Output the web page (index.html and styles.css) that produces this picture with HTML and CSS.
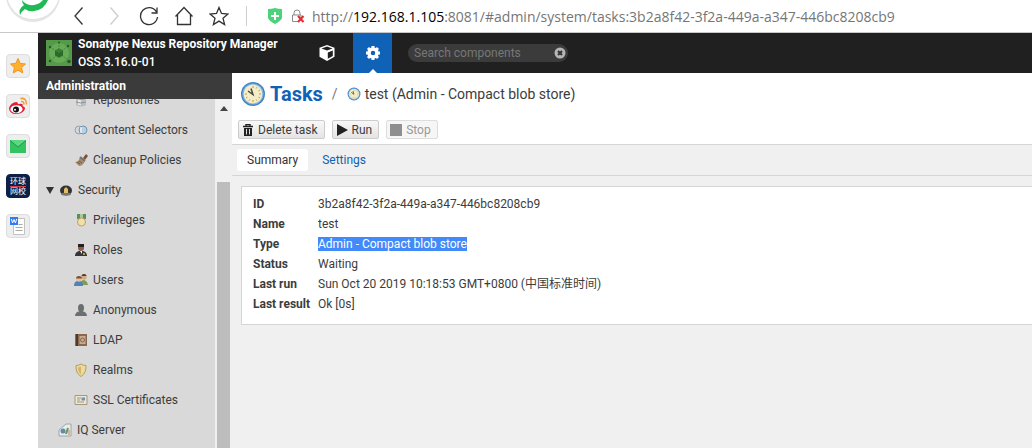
FILE: index.html
```html
<!DOCTYPE html>
<html lang="en">
<head>
  <meta charset="UTF-8"/>
  <meta name="viewport" content="width=device-width, initial-scale=1.0"/>
  <title>Tasks - Nexus Repository Manager</title>
  <link rel="stylesheet" href="styles.css">
</head>
<body>
  <svg class="defs" aria-hidden="true">
    <symbol id="clock" viewBox="0 0 26 26">
      <circle cx="13" cy="13" r="12" fill="#3f86c6"/>
      <circle cx="13" cy="13" r="10.6" fill="#7fb2dd"/>
      <circle cx="13" cy="13" r="9.4" fill="#f4edc6"/>
      <path d="M13 5v2M13 19v2M5 13h2M19 13h2M17 6.200l-.8 1.300M20 9l-1.400.8M20 17l-1.400-.8M17 19.800l-.8-1.300M9 19.800l.8-1.300M6 17l1.400-.8" stroke="#a59c78" fill="none"/>
      <path d="M8 10l5 3.500-2-6" stroke="#4a4a42" stroke-width="1.500" fill="none"/>
    </symbol>
  </svg>

  <!-- Browser bar -->
  <div class="browser">
    <div class="browser-logo">
      <svg width="61" height="32" viewBox="0 0 61 32">
        <circle cx="33" cy="-5" r="27" fill="#e4e4e4"/>
        <circle cx="33" cy="-7" r="26" fill="#fff"/>
        <path d="M22 0Q26 6 34 5Q40 4 43 0L48 0Q44 10 34 11Q29 12 25 9Q22 11 20 15Q18 9 24 5Q22 3 22 0Z" fill="#1fb956"/>
      </svg>
    </div>
    <button class="nav-btn" aria-label="Back"><svg width="20" height="20" viewBox="0 0 20 20"><path d="M13.500 1.500L6 10l7.500 8.500"/></svg></button>
    <button class="nav-btn off" aria-label="Forward"><svg width="20" height="20" viewBox="0 0 20 20"><path d="M6.500 1.500L14 10l-7.500 8.500"/></svg></button>
    <button class="nav-btn" aria-label="Reload"><svg width="20" height="20" viewBox="0 0 20 20"><path d="M17.500 6A8.500 8.500 0 1 0 18.500 11M18 1.500V7h-5.500"/></svg></button>
    <button class="nav-btn" aria-label="Home"><svg width="20" height="20" viewBox="0 0 20 20"><path d="M1.500 10.500L10 1.500l8.500 9M3.500 9v9.500h13V9"/></svg></button>
    <button class="nav-btn" aria-label="Favorite"><svg width="20" height="20" viewBox="0 0 20 20"><path d="M10 1.500l2.500 6 6.500.5-5 4.200 1.600 6.300L10 15.100l-5.600 3.400L6 12.200 1 8l6.500-.5z"/></svg></button>
    <span class="divider"></span>
    <svg class="shield" width="14" height="16" viewBox="0 0 14 16"><path d="M0 1Q4 1 7 0Q10 1 14 1V10Q13 13 7 16Q1 13 0 10Z" fill="#4bd37b"/><path d="M7 4v8M3 8h8" stroke="#fff" stroke-width="2"/></svg>
    <svg class="lock" width="14" height="14" viewBox="0 0 14 14"><path d="M3 6V4a3 3 0 0 1 6 0v2M8 12.500H1.500V6H10v2" fill="none" stroke="#8b8b8b"/><path d="M7 7l5.500 6M12.500 7L7 13" stroke="#e02b35" stroke-width="2"/></svg>
    <div class="url">http://<b>192.168.1.105</b>:8081/#admin/system/tasks:3b2a8f42-3f2a-449a-a347-446bc8208cb9</div>
  </div>

  <div class="window">
    <!-- Shortcuts -->
    <div class="rail">
      <a class="shortcut" href="#" aria-label="Favorites"><svg width="24" height="24" viewBox="0 0 24 24"><path d="M12 4.500l2.200 4.900 5.300.6-3.900 3.600 1.100 5.300-4.700-2.700-4.700 2.700 1.100-5.300L4.500 10l5.300-.6z" fill="#ffb12e" stroke="#f29422"/></svg></a>
      <a class="shortcut" href="#" aria-label="Weibo"><svg width="24" height="24" viewBox="0 0 24 24"><path d="M3 15Q3 11 8 8.500Q12 7 12 10Q18 9 16.500 12Q20 13 18.500 16Q16 20 10 20Q4 20 3 15Z" fill="#df2038"/><ellipse cx="10.500" cy="15.200" rx="6" ry="4" fill="#fff"/><circle cx="10" cy="15.500" r="3" fill="#111"/><circle cx="9" cy="15.800" r="1" fill="#fff"/><path d="M14.500 4.500q6-1 6 6M15 7.500q3-.5 3 3" fill="none" stroke="#f29a2e" stroke-width="1.500"/></svg></a>
      <a class="shortcut" href="#" aria-label="Mail"><svg width="24" height="24" viewBox="0 0 24 24"><path d="M4 6h16v13H4z" fill="#35c263"/><path d="M4 6h16l-8 7z" fill="#5ad982"/><path d="M4 6.500l8 6.500 8-6.500" fill="none" stroke="#1c9c48"/></svg></a>
      <a class="shortcut school" href="#"><span>环球</span><span>网校</span></a>
      <a class="shortcut" href="#" aria-label="Document"><svg width="24" height="24" viewBox="0 0 24 24"><path d="M7.500 4.500h11v16h-11z" fill="#fff" stroke="#c2c2c2"/><path d="M12.500 10.500h4M9.500 13.500h7M9.500 16.500h7" stroke="#aaa"/><path d="M4 3h8v8H4z" fill="#2f7df0"/><path d="M5.300 5l1.300 4L8 5.500 9.400 9l1.300-4" fill="none" stroke="#fff"/></svg></a>
    </div>

    <div class="app">
      <!-- Header -->
      <header class="app-header">
        <svg class="app-logo" width="26" height="26" viewBox="0 0 26 26">
          <path d="M0 0h26v26H0z" fill="#549a48"/><circle cx="13" cy="13" r="10" fill="#66ab56"/>
          <path d="M13 13L4 7M13 13l9-7M13 13L4 21M13 13l10 8M13 13V2" stroke="#4a8a40" stroke-dasharray="2 1"/>
          <path d="M13 8.500l4 2.300v4.600L13 17.700l-4-2.300v-4.600z" fill="#2c6a2a"/><path d="M13 8.500l4 2.300-4 2.200-4-2.200z" fill="#3c7e36"/>
          <g fill="#2a5826"><circle cx="4" cy="7" r="1.200"/><circle cx="22" cy="6" r="1.200"/><circle cx="4" cy="21" r="1.200"/><circle cx="23" cy="21.500" r="1.800"/><circle cx="13" cy="2.500" r="1"/></g>
        </svg>
        <div class="app-name"><div>Sonatype Nexus Repository Manager</div><div class="version">OSS 3.16.0-01</div></div>
        <button class="mode" aria-label="Browse"><svg width="18" height="18" viewBox="0 0 18 18"><path d="M9 1l7.500 2.800v9L9 17l-7.500-4.200v-9z" fill="#fff"/><path d="M3.500 4.400L9 2.600l5.500 1.800L9 6.600z" fill="#202020"/><path d="M9.800 8.600l5-2.200v5.500l-5 2.900z" fill="#202020"/></svg></button>
        <button class="mode active" aria-label="Administration"><svg width="16" height="16" viewBox="0 0 16 16"><circle cx="8" cy="8" r="4" fill="none" stroke="#fff" stroke-width="3.500"/><path d="M8 1v2.500M8 12.500V15M1 8h2.500M12.500 8H15M3 3l2 2M11 11l2 2M3 13l2-2M11 5l2-2" stroke="#fff" stroke-width="3"/></svg></button>
        <div class="search">
          <input type="text" placeholder="Search components" aria-label="Search components"/>
          <button aria-label="Clear"><svg width="12" height="12" viewBox="0 0 12 12"><circle cx="6" cy="6" r="5.500" fill="#b5b5b5"/><path d="M4 4l4 4M8 4L4 8" stroke="#333" stroke-width="2"/></svg></button>
        </div>
      </header>

      <div class="app-body">
        <!-- Admin menu -->
        <aside class="sidebar">
          <h2>Administration</h2>
          <div class="tree-wrap">
            <ul class="tree">
              <li class="sub"><svg width="14" height="14" viewBox="0 0 14 14"><path d="M2 2h10v10q-5 3-10 0z" fill="#b9bdc0"/><path d="M4 3h3v9H4z" fill="#e6e8ea"/><path d="M2 5.500q5 2 10 0M2 9q5 2 10 0" stroke="#8e9397" fill="none"/></svg><a href="#">Repositories</a></li>
              <li class="sub"><svg width="14" height="14" viewBox="0 0 14 14"><rect x="1" y="3" width="8" height="8" rx="4" fill="#d5d8da" stroke="#9aa1a7"/><rect x="5" y="3" width="8" height="8" rx="4" fill="#b9d0e4" stroke="#7592ac"/><path d="M7 4v6" stroke="#fff"/></svg><a href="#">Content Selectors</a></li>
              <li class="sub"><svg width="14" height="14" viewBox="0 0 14 14"><path d="M9 5l3-4 2 2-3 4z" fill="#7a5335"/><path d="M6 4l5 4q-2 5-6 5L1 9q4 0 5-5z" fill="#a98a69"/><path d="M6 4l5 4" stroke="#70747a" stroke-width="2"/><path d="M3 9l3 2M5 8l3 2" stroke="#725a41"/></svg><a href="#">Cleanup Policies</a></li>
              <li class="top"><span class="arrow"></span><svg width="14" height="14" viewBox="0 0 14 14"><ellipse cx="7" cy="7.500" rx="6" ry="5" fill="#333"/><ellipse cx="7" cy="11" rx="5" ry="1.500" fill="#777"/><path d="M7 4l2 2v4H5V6z" fill="#e3bd62"/></svg><a href="#">Security</a></li>
              <li class="sub"><svg width="14" height="14" viewBox="0 0 14 14"><path d="M3 1h9v5H3z" fill="#5c9155"/><path d="M6 1h3v5H6z" fill="#a8c89d"/><circle cx="7.500" cy="9" r="4" fill="#f3dfaa" stroke="#bf9f64"/></svg><a href="#">Privileges</a></li>
              <li class="sub"><svg width="14" height="14" viewBox="0 0 14 14"><path d="M1 13q0-4 4-5h4q4 1 4 5z" fill="#34363a"/><circle cx="7" cy="5" r="3" fill="#8c5e46"/><path d="M4 1h6v3H4z" fill="#222"/><path d="M6 8h2v3z" fill="#fff"/><circle cx="10" cy="11" r="1" fill="#e8bd45"/></svg><a href="#">Roles</a></li>
              <li class="sub"><svg width="14" height="14" viewBox="0 0 14 14"><path d="M6 12V9l3-2q4 0 5 5z" fill="#7c9e58"/><circle cx="10" cy="4" r="2.700" fill="#d6a987"/><path d="M7.500 3q0-2 2.500-2t2.500 2z" fill="#5b3a26"/><path d="M0 13q0-5 4-5h1q4 0 4 5z" fill="#4f83bb"/><circle cx="5" cy="6" r="2.700" fill="#e6c09f"/><path d="M2 5.500Q2 3 5 3t3 2.500z" fill="#7c5233"/></svg><a href="#">Users</a></li>
              <li class="sub"><svg width="14" height="14" viewBox="0 0 14 14"><path d="M1 13q0-4 5-5h2q5 1 5 5z" fill="#6c6f70"/><ellipse cx="7" cy="5" rx="3" ry="4" fill="#6c6f70"/></svg><a href="#">Anonymous</a></li>
              <li class="sub"><svg width="14" height="14" viewBox="0 0 14 14"><path d="M1 1h12v12H1z" fill="#8b6850"/><path d="M2 1h2v12H2z" fill="#513a2c"/><path d="M5.500 3h6v8h-6z" fill="#c9ad90"/><circle cx="8.500" cy="7" r="2" fill="none" stroke="#85674d"/></svg><a href="#">LDAP</a></li>
              <li class="sub"><svg width="14" height="14" viewBox="0 0 14 14"><path d="M7 1q2 1.500 5 1.500Q12.500 10 7 13.500Q1.500 10 2 2.500Q5 2.500 7 1z" fill="#eedb9c" stroke="#b49b62"/><path d="M7 3.500v8Q4 9 4 4.500z" fill="#d1b66f"/></svg><a href="#">Realms</a></li>
              <li class="sub"><svg width="14" height="14" viewBox="0 0 14 14"><path d="M1 2.500h12v9H1z" fill="#eee6d0" stroke="#a8997e"/><path d="M3 5h4M3 7h3M3 9h7" stroke="#9b9b90"/><path d="M7.500 4.500h3.500v3H7.500z" fill="#6f91b5"/></svg><a href="#">SSL Certificates</a></li>
              <li class="top leaf"><svg width="14" height="14" viewBox="0 0 14 14"><path d="M1 7l7-6h5v12H1z" fill="#e8ebec" stroke="#9fa6a9"/><circle cx="5" cy="8" r="2.500" fill="#5f8cab"/><path d="M8 11l2-6" stroke="#5b9c5b" stroke-width="2"/><path d="M11 7v5" stroke="#d0744a"/></svg><a href="#">IQ Server</a></li>
            </ul>
            <div class="scrollbar"><span class="scroll-up"></span><span class="thumb"></span></div>
          </div>
        </aside>

        <!-- Task details -->
        <main>
          <div class="crumbs">
            <svg width="26" height="26"><use href="#clock"/></svg>
            <h1>Tasks</h1>
            <span class="slash">/</span>
            <svg width="14" height="14"><use href="#clock"/></svg>
            <span class="crumb">test (Admin - Compact blob store)</span>
          </div>
          <div class="actions">
            <button><svg width="12" height="12" viewBox="0 0 12 12"><path d="M4 2V.5h4V2M1 2.500h10" fill="none" stroke="#222" stroke-width="1.400"/><path d="M2 4h8v8H2z" fill="#222"/><path d="M4.500 5v5.500M7.500 5v5.500" stroke="#ddd"/></svg>Delete task</button>
            <button><svg width="12" height="12" viewBox="0 0 12 12"><path d="M1 0l11 6-11 6z" fill="#222"/></svg>Run</button>
            <button disabled><svg width="12" height="12" viewBox="0 0 12 12"><path d="M0 0h12v12H0z" fill="#8f8f8f"/></svg>Stop</button>
          </div>
          <div class="tabs">
            <button class="tab active">Summary</button>
            <button class="tab">Settings</button>
          </div>
          <div class="panel">
            <table>
              <tr><th scope="row">ID</th><td>3b2a8f42-3f2a-449a-a347-446bc8208cb9</td></tr>
              <tr><th scope="row">Name</th><td>test</td></tr>
              <tr><th scope="row">Type</th><td><mark>Admin - Compact blob store</mark></td></tr>
              <tr><th scope="row">Status</th><td>Waiting</td></tr>
              <tr><th scope="row">Last run</th><td>Sun Oct 20 2019 10:18:53 GMT+0800 (中国标准时间)</td></tr>
              <tr><th scope="row">Last result</th><td>Ok [0s]</td></tr>
            </table>
          </div>
        </main>
      </div>
    </div>
  </div>
</body>
</html>
```
FILE: styles.css
```css
* { box-sizing: border-box; margin: 0; padding: 0; }
html, body { height: 100%; }
body {
  display: flex; flex-direction: column;
  overflow: hidden; background: #fff; color: #3c3c3c;
  font-family: Roboto, "Noto Sans CJK SC", sans-serif;
  font-size: 12px;
}
button, input { font: inherit; color: inherit; border: none; background: none; }
button { cursor: pointer; }
a { color: inherit; text-decoration: none; }
svg { flex: none; display: block; }
.defs { position: absolute; width: 0; height: 0; }

/* Browser bar */
.browser {
  flex: 0 0 33px;
  display: flex; align-items: center;
  border-bottom: 1px solid #c8c8c8;
  white-space: nowrap;
}
.browser-logo { flex: 0 0 61px; height: 32px; }
.nav-btn {
  flex: 0 0 35px; height: 30px;
  display: flex; align-items: center; justify-content: center;
}
.nav-btn path { fill: none; stroke: #333; stroke-width: 1.3; }
.nav-btn.off path { stroke: #ccc; }
.divider { width: 1px; height: 20px; margin: 0 21px 0 10px; background: #ccc; }
.lock { margin: 0 7px 0 9px; }
.url {
  font-family: "Open Sans", sans-serif;
  font-size: 14px; color: #767676;
}
.url b { font-weight: normal; color: #000; }

.window { flex: 1; display: flex; min-height: 0; }

/* Shortcuts */
.rail {
  flex: 0 0 38px;
  display: flex; flex-direction: column; align-items: center;
  gap: 16px; padding: 21px 2px 0 0;
}
.shortcut {
  width: 24px; height: 24px;
  display: flex; flex-direction: column;
  align-items: center; justify-content: center;
  background: #eee; border: 1px solid #ddd; border-radius: 4px;
}
.school {
  background: #0c2145; border-color: #0c2145; color: #fff;
  font-size: 8px; line-height: 9px;
}
.school span + span { border-top: 1px solid #d33b4b; }

/* Header */
.app { flex: 1; display: flex; flex-direction: column; min-width: 0; }
.app-header {
  flex: 0 0 40px;
  display: flex; align-items: center;
  background: #202020; color: #fff;
}
.app-logo { margin: 0 6px 0 8px; }
.app-name {
  width: 229px;
  line-height: 18px; font-weight: bold;
  white-space: nowrap;
}
.version { font-weight: 500; }
.mode {
  width: 39px; height: 40px; margin-right: 7px;
  display: flex; align-items: center; justify-content: center;
}
.mode.active { position: relative; margin-right: 16px; background: #0f62b5; }
.mode.active::after {
  content: ""; position: absolute; bottom: 0; left: 50%;
  margin-left: -4px;
  border: 4px solid transparent; border-top: none;
  border-bottom-color: #fff;
}
.search {
  width: 160px; height: 18px; padding: 0 2px 0 6px;
  display: flex; align-items: center;
  background: #3b3b3b; border-radius: 9px;
}
.search input { flex: 1; min-width: 0; outline: none; color: #fff; }
.search input::placeholder { color: #777; }

.app-body { flex: 1; display: flex; min-height: 0; }

/* Admin menu */
.sidebar { flex: 0 0 194px; display: flex; flex-direction: column; }
.sidebar h2 {
  padding-left: 8px;
  font-size: 12px; line-height: 26px;
  background: #3b3b3b; color: #fff;
}
.tree-wrap {
  flex: 1; display: flex; min-height: 0;
  overflow: hidden; background: #d9d9d9;
}
.tree { flex: 1; margin-top: -14px; list-style: none; }
.tree li { display: flex; align-items: center; gap: 5px; height: 30px; }
.tree .sub { padding-left: 36px; }
.tree .top { padding-left: 8px; }
.tree .leaf { padding-left: 20px; }
.arrow {
  border: 4px solid transparent; border-bottom: none;
  border-top: 7px solid #333;
}
.scrollbar {
  width: 17px; padding: 7px 2px 0;
  display: flex; flex-direction: column; align-items: center;
  gap: 71px; background: #f0f0f0;
}
.scroll-up {
  border: 4px solid transparent; border-top: none;
  border-bottom: 5px solid #444;
}
.thumb { flex: 1; width: 13px; background: #bdbdbd; }

/* Task details */
main { flex: 1; min-width: 0; background: #f0f0f0; }
.crumbs {
  display: flex; align-items: center;
  height: 41px; padding-left: 8px;
  background: #fff; white-space: nowrap;
}
.crumbs h1 { margin-left: 4px; font-size: 20px; color: #0f62b5; }
.slash { margin: 0 9px; font-size: 14px; color: #777; }
.crumb { margin-left: 4px; font-size: 14px; }
.actions {
  display: flex; gap: 7px;
  padding: 6px 6px 5px;
  background: #fff; border-bottom: 1px solid #d5d5d5;
}
.actions button {
  display: flex; align-items: center; gap: 4px;
  height: 19px; padding: 0 6px 0 3px;
  border: 1px solid #ccc; border-radius: 2px;
  background: linear-gradient(#f8f8f8, #e4e4e4);
}
.actions button:disabled { color: #999; border-color: #ddd; background: #f6f6f6; }
.tabs {
  display: flex; gap: 4px;
  padding: 4px 5px; border-bottom: 1px solid #d5d5d5;
}
.tab { height: 22px; padding: 0 10px; border-radius: 3px; color: #0f62b5; }
.tab.active { background: #fff; color: #333; }
.panel {
  margin: 10px 0 0 9px; padding: 7px 11px 10px;
  background: #fff; border: 1px solid #d5d5d5; border-right: none;
}
table { border-collapse: collapse; }
tr { height: 20px; }
th { width: 65px; text-align: left; white-space: nowrap; }
td { line-height: 14px; }
mark { background: #4289f9; color: #fff; }
```
